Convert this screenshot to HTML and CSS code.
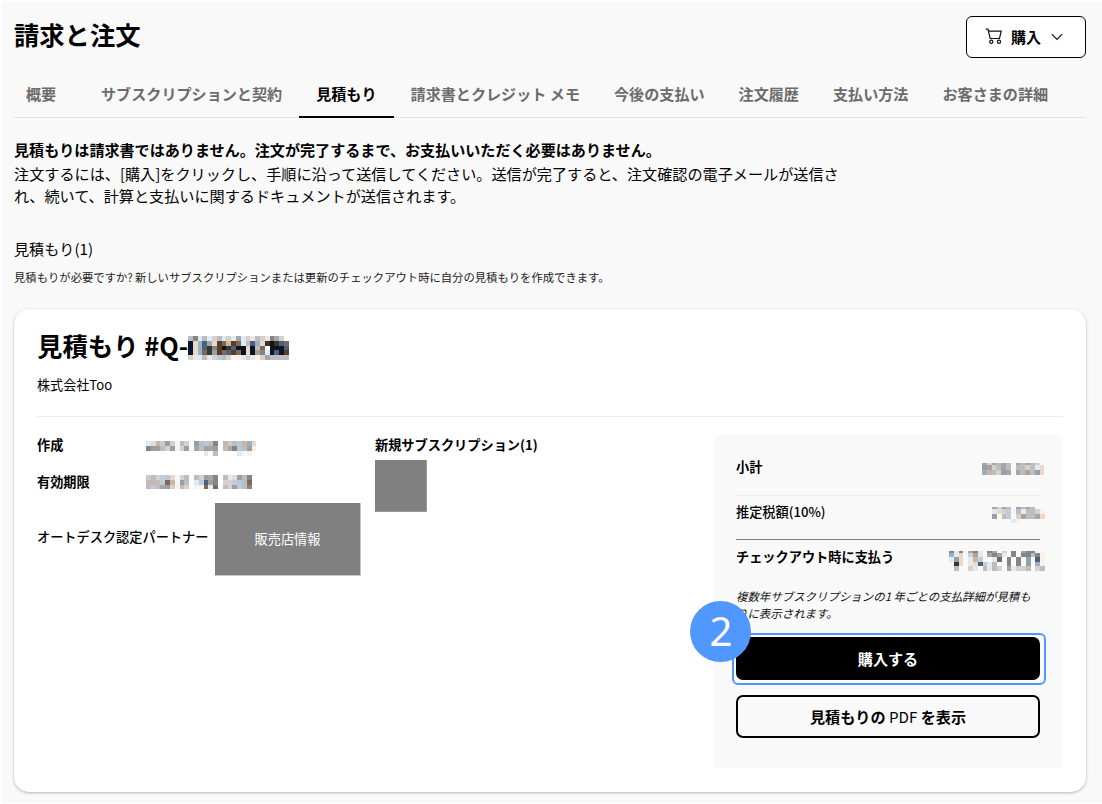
FILE: index.html
```html
<!DOCTYPE html>
<html lang="ja">
<head>
    <meta charset="UTF-8">
    <meta name="viewport" content="width=device-width, initial-scale=1.0">
    <title>請求と注文</title>
    <link rel="stylesheet" href="styles.css">
</head>
<body>
    <div class="page">
        <header class="header">
            <h1 class="page-title">請求と注文</h1>
            <button class="buy-menu" type="button">
                <svg class="cart-icon" width="18" height="17" viewBox="0 0 18 17">
                    <path d="M.8 1.2h2.1l2.3 9.3h9.3l1.7-7.4H3.5"/>
                    <circle cx="6.3" cy="13.7" r="1.6"/>
                    <circle cx="14" cy="13.7" r="1.6"/>
                </svg>
                <span>購入</span>
                <svg class="chevron-icon" width="12" height="8" viewBox="0 0 12 8">
                    <path d="M.8 1.2 6 6.4l5.2-5.2"/>
                </svg>
            </button>
        </header>

        <nav class="tabs">
            <a class="tab tab-first">概要</a>
            <a class="tab">サブスクリプションと契約</a>
            <a class="tab active">見積もり</a>
            <a class="tab">請求書とクレジット メモ</a>
            <a class="tab">今後の支払い</a>
            <a class="tab">注文履歴</a>
            <a class="tab">支払い方法</a>
            <a class="tab">お客さまの詳細</a>
        </nav>

        <div class="intro">
            <strong>見積もりは請求書ではありません。注文が完了するまで、お支払いいただく必要はありません。</strong>
            <p>注文するには、[購入]をクリックし、手順に沿って送信してください。送信が完了すると、注文確認の電子メールが送信さ<br>れ、続いて、計算と支払いに関するドキュメントが送信されます。</p>
        </div>

        <h2 class="list-title">見積もり(1)</h2>
        <p class="list-hint">見積もりが必要ですか?&thinsp;新しいサブスクリプションまたは更新のチェックアウト時に自分の見積もりを作成できます。</p>

        <section class="card">
            <div class="card-head">
                <h3 class="quote-title">見積もり #Q-<svg class="mosaic quote-number" data-mosaic="number"></svg></h3>
                <p class="company">株式会社Too</p>
            </div>
            <div class="card-body">
                <div class="details">
                    <div class="detail-row">
                        <span class="detail-label">作成</span>
                        <svg class="mosaic" data-mosaic="created"></svg>
                    </div>
                    <div class="detail-row">
                        <span class="detail-label">有効期限</span>
                        <svg class="mosaic" data-mosaic="expires"></svg>
                    </div>
                    <div class="partner-row">
                        <span>オートデスク認定パートナー</span>
                        <div class="partner-box">販売店情報</div>
                    </div>
                </div>

                <div class="products">
                    <span>新規サブスクリプション(1)</span>
                    <div class="product-box"></div>
                </div>

                <aside class="summary">
                    <div class="sum-row subtotal">
                        <span>小計</span>
                        <svg class="mosaic" data-mosaic="subtotal"></svg>
                    </div>
                    <div class="sum-row tax">
                        <span>推定税額(10%)</span>
                        <svg class="mosaic" data-mosaic="tax"></svg>
                    </div>
                    <div class="sum-row total">
                        <span>チェックアウト時に支払う</span>
                        <svg class="mosaic" data-mosaic="total"></svg>
                    </div>
                    <p class="note">複数年サブスクリプションの1 年ごとの支払詳細が見積も<br>りに表示されます。</p>
                    <div class="buy-wrap">
                        <button class="btn btn-primary" type="button">購入する</button>
                        <div class="focus-ring"></div>
                        <div class="step-badge">2</div>
                    </div>
                    <button class="btn btn-outline" type="button">見積もりの <span class="light">PDF</span> を表示</button>
                </aside>
            </div>
        </section>
    </div>

    <script src="mosaic.js"></script>
</body>
</html>
```
FILE: styles.css
```css
* {
    margin: 0;
    padding: 0;
    box-sizing: border-box;
    font-family: 'Noto Sans CJK JP', 'Noto Sans', sans-serif;
}

body {
    background: white;
    color: #000;
    padding: 1px 0 1px 1px;
    height: 804px;
    overflow: hidden;
    white-space: nowrap;
}

.page {
    background: #f9f9f9;
    height: 802px;
    padding: 15px 16px 0 13px;
}

.header {
    display: flex;
    justify-content: space-between;
    height: 42px;
}

.page-title {
    font-size: 25.3px;
    font-weight: 700;
    line-height: 36px;
}

.buy-menu {
    width: 120px;
    height: 42px;
    display: flex;
    align-items: center;
    padding-left: 18px;
    padding-bottom: 1px;
    background: white;
    border: 1px solid #000;
    border-radius: 6px;
    font-size: 15px;
    font-weight: 700;
    color: #000;
}

.cart-icon,
.chevron-icon {
    fill: none;
    stroke: #111;
    stroke-width: 1.2;
}

.cart-icon {
    margin-right: 8px;
}

.chevron-icon {
    margin-left: 10px;
}

.tabs {
    display: flex;
    height: 60px;
    border-bottom: 1px solid #e3e3e3;
}

.tab {
    height: 60px;
    padding: 23px 17px 0;
    font-size: 15.1px;
    font-weight: 700;
    line-height: 24px;
    color: #6c6c6c;
}

.tab-first {
    width: 70px;
    padding-left: 12px;
    padding-right: 0;
}

.tab.active {
    color: #000;
    border-bottom: 2px solid #000;
}

.intro {
    margin-top: 21px;
    font-size: 15.14px;
    line-height: 22.5px;
}

.intro strong {
    display: block;
    font-size: 15.08px;
}

.list-title {
    margin-top: 29px;
    font-size: 15.12px;
    font-weight: 400;
    line-height: 24px;
}

.list-hint {
    margin-top: 8px;
    font-size: 11.34px;
    line-height: 18px;
    color: #222;
}

.card {
    height: 483px;
    margin-top: 23px;
    padding: 0 23px;
    background: white;
    border-radius: 15px;
    box-shadow: 0 1px 3px rgba(0, 0, 0, 0.28);
}

.card-head {
    height: 108px;
    padding-top: 17px;
    border-bottom: 1px solid #eee;
}

.quote-title {
    display: flex;
    font-size: 25.4px;
    font-weight: 700;
    line-height: 38px;
}

.quote-number {
    margin-top: 10px;
}

.company {
    margin-top: 10px;
    font-size: 13.1px;
    line-height: 22px;
}

.card-body {
    display: grid;
    grid-template-columns: 338px 339px 349px;
    padding-top: 18px;
}

.details,
.products {
    font-size: 13.2px;
    font-weight: 700;
    line-height: 19px;
}

.detail-row {
    display: flex;
    align-items: flex-start;
    height: 37px;
}

.detail-label {
    width: 109px;
}

.detail-row .mosaic {
    margin-top: 6px;
}

.detail-row + .detail-row .mosaic {
    margin-top: 3px;
}

.partner-row {
    display: flex;
    gap: 5px;
    margin-top: -6px;
    line-height: 68px;
}

.partner-row span {
    width: 173px;
    font-weight: 500;
}

.partner-box {
    width: 146px;
    height: 73px;
    background: #808080;
    border-right: 1px solid #c8c8c8;
    border-bottom: 1px solid #c8c8c8;
    color: white;
    font-weight: 400;
    line-height: 72px;
    text-align: center;
}

.product-box {
    width: 52px;
    height: 52px;
    margin-top: 6px;
    background: #808080;
    border-right: 1px solid #999;
    border-bottom: 1px solid #999;
}

.summary {
    height: 333px;
    padding: 0 23px 0 22px;
    background: #f9f9f9;
    border-radius: 4px;
}

.sum-row {
    display: flex;
    justify-content: space-between;
    font-size: 13.2px;
    font-weight: 700;
    line-height: 20px;
}

.sum-row .mosaic {
    margin-right: -5px;
}

.subtotal {
    height: 61px;
    padding-top: 22px;
    border-bottom: 1px solid #eee;
}

.subtotal .mosaic {
    margin-top: 6px;
}

.tax {
    height: 44px;
    padding-top: 6px;
    font-weight: 500;
    border-bottom: 1px solid #808080;
}

.tax .mosaic {
    margin-top: 5px;
}

.total {
    height: 48px;
    padding-top: 7px;
}

.total .mosaic {
    margin-top: 4px;
}

.note {
    font-size: 11.45px;
    font-style: italic;
    line-height: 17px;
    color: #111;
}

.buy-wrap {
    position: relative;
    margin-top: 15px;
}

.btn {
    display: block;
    width: 304px;
    height: 43px;
    border-radius: 7px;
    font-size: 15.12px;
    font-weight: 700;
}

.btn-primary {
    background: #000;
    border: none;
    color: white;
}

/* the ring sits slightly off centre around the button */
.focus-ring {
    position: absolute;
    left: -4px;
    top: -4px;
    width: 314px;
    height: 52px;
    border: 2px solid #5098ff;
    border-radius: 6px;
}

.btn-outline {
    margin-top: 15px;
    padding-bottom: 1px;
    background: transparent;
    border: 2px solid #000;
    color: #000;
}

.light {
    font-weight: 400;
}

/* numbered callout over the corner of the buy button */
.step-badge {
    position: absolute;
    left: -46px;
    top: -36px;
    width: 61px;
    height: 61px;
    border-radius: 50%;
    background: #5098ff;
    color: white;
    font-family: 'Noto Sans', sans-serif;
    font-size: 40px;
    line-height: 60px;
    padding-left: 1px;
    text-align: center;
}
```
FILE: mosaic.js
```js
// Hidden values are drawn as coarse colour cells: one letter per cell
const colors = {
    a: '#111111', b: '#3c352c', c: '#4c6077', d: '#7c685c', e: '#858585',
    f: '#a5a5a5', g: '#bdbdbd', h: '#d6d1cb', i: '#e9e9ec', j: '#b5c9dc',
    k: '#e8d9cb', l: '#c5cad8', m: '#98a0a6', n: '#cdb5a3', o: '#dcebf6',
    p: '#eff8fd', q: '#fdf0e4', r: '#06172b', s: '#5b3c24', t: '#9ab0c4'
};

const mosaics = {
    number: {
        w: 4.8, heights: [5, 5, 4, 5, 5],
        rows: ['geogohgohifohighiefh.', 'rktcfksdnsdogctkbabcd', 'rktcbesabcrakrnd.rarc', 'rktdbmsdcsdakrmeorcrs', 'hiogohjghpqohiqhfgggg']
    },
    created: {
        w: 4.8, heights: [5, 5, 5],
        rows: ['oknlmhpgh.mgjge.nlgjntk', 'emmghmphm.fgmfm.gfejgmq', '............i.g....opq.']
    },
    expires: {
        w: 4.8, heights: [5, 5, 4],
        rows: ['lghljkphg.ghmfe.gokmge', 'gngldnpmg.olcme.hhljgd', 'glgfmhqgh.pqdid.ghmlge']
    },
    subtotal: {
        w: 4.8, heights: [2, 5, 5],
        rows: ['fhfgfg.fgfgh.', 'mfhgfg.gghgok', 'tnghmf.fgfgmk']
    },
    tax: {
        w: 4.8, heights: [2, 5, 5, 4],
        rows: ['fhfg.fgfg..', 'okhlpgogghq', 'm.gl.hfggfk', '....oq.....']
    },
    total: {
        w: 4.8, heights: [2, 4, 5, 4, 5],
        rows: ['eoe.fei.ef.h.e.fee..', 'tok.hfi.fefi.e.eegeq', 'omk.onl..id.e.e.m.cq', 'pbk.ikclog..e.e.m.tq', '.g..ho.gigh.fihhg.hg']
    }
};

document.querySelectorAll('[data-mosaic]').forEach(svg => {
    const m = mosaics[svg.dataset.mosaic];
    const height = m.heights.reduce((sum, h) => sum + h, 0);
    const width = Math.ceil(m.rows[0].length * m.w);
    svg.setAttribute('width', width);
    svg.setAttribute('height', height);

    let y = 0;
    m.rows.forEach((row, r) => {
        [...row].forEach((cell, c) => {
            if (!colors[cell]) return;
            const rect = document.createElementNS('http://www.w3.org/2000/svg', 'rect');
            const x = Math.round(c * m.w);
            rect.setAttribute('x', x);
            rect.setAttribute('y', y);
            rect.setAttribute('width', Math.round((c + 1) * m.w) - x);
            rect.setAttribute('height', m.heights[r]);
            rect.setAttribute('fill', colors[cell]);
            svg.appendChild(rect);
        });
        y += m.heights[r];
    });
});
```
